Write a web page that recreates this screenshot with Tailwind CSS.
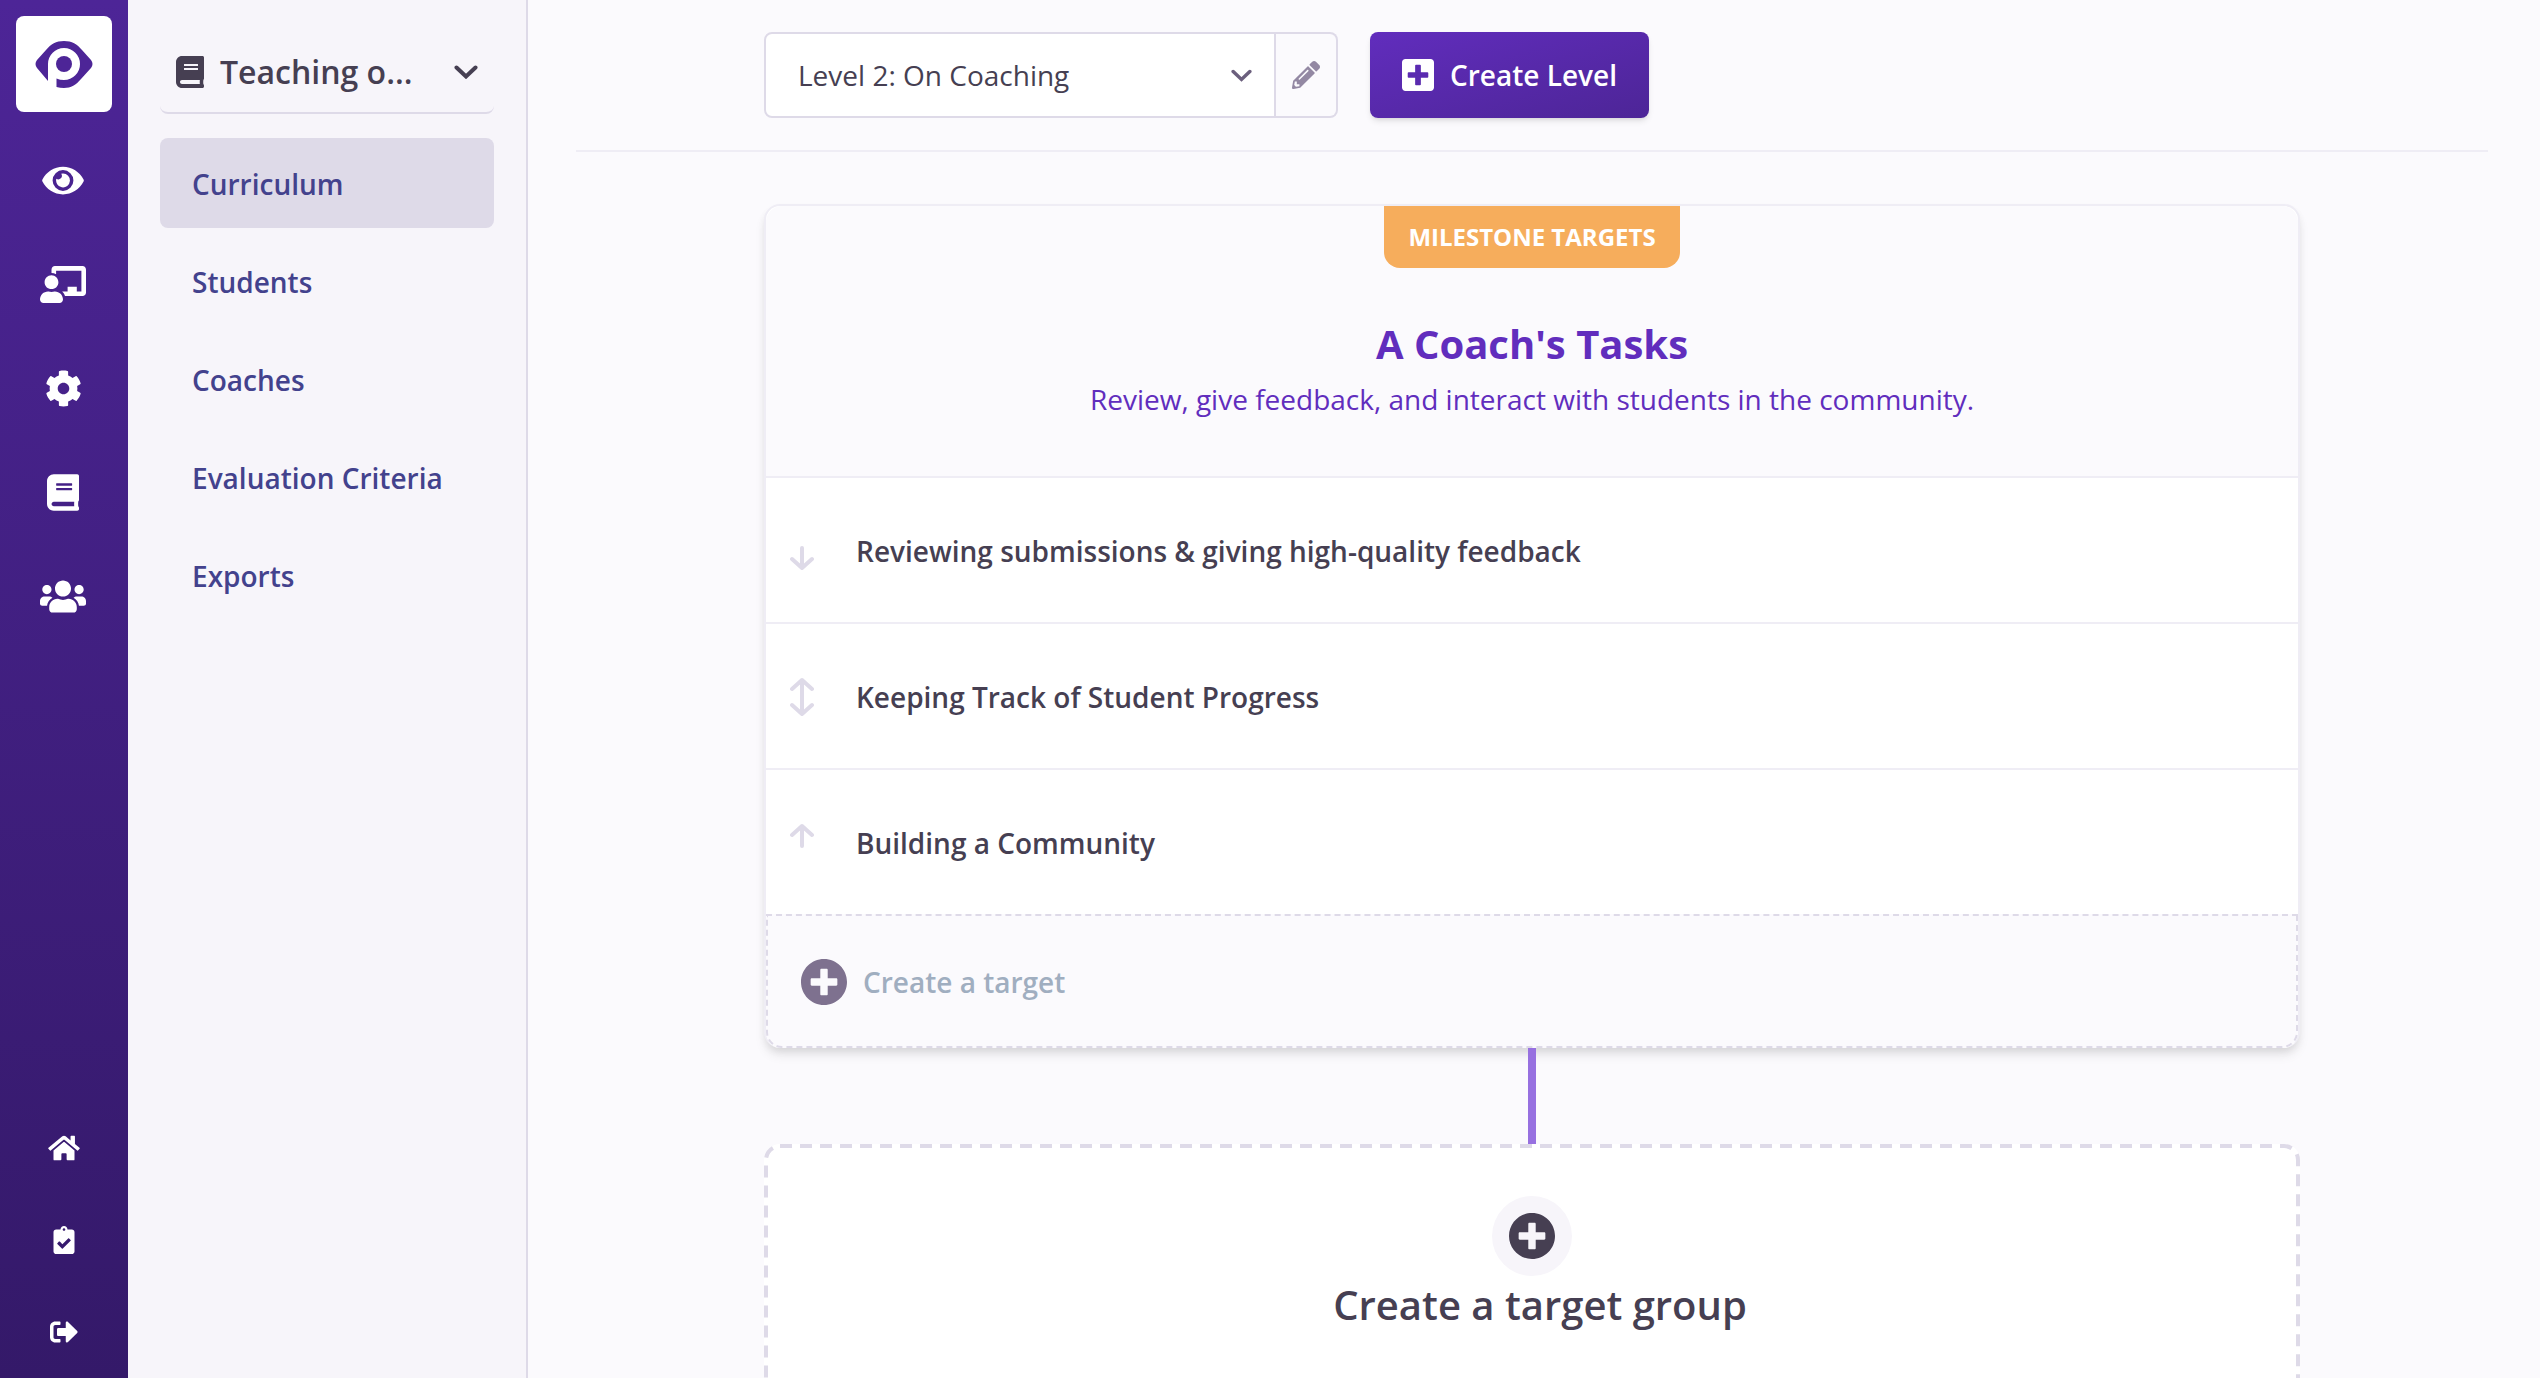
<!DOCTYPE html>
<html lang="en">
<head>
<meta charset="utf-8">
<title>Curriculum</title>
<script src="https://cdn.jsdelivr.net/npm/@tailwindcss/browser@4"></script>
</head>
<body class="bg-[#fbfafd] font-['Open_Sans',sans-serif] text-[28px] leading-[42px] text-[#463f52]">
<svg class="hidden" aria-hidden="true">
  <symbol id="book" viewBox="0 0 448 512"><path d="M448 360V24c0-13.300-10.700-24-24-24H96C43 0 0 43 0 96v320c0 53 43 96 96 96h328c13.300 0 24-10.700 24-24v-16c0-7.500-3.500-14.300-8.900-18.700-4.200-15.400-4.200-59.300 0-74.700 5.400-4.300 8.900-11.100 8.900-18.600zM128 134c0-3.300 2.700-6 6-6h212c3.300 0 6 2.700 6 6v20c0 3.300-2.700 6-6 6H134c-3.300 0-6-2.700-6-6v-20zm0 64c0-3.300 2.700-6 6-6h212c3.300 0 6 2.700 6 6v20c0 3.300-2.700 6-6 6H134c-3.300 0-6-2.700-6-6v-20zm253.400 250H96c-17.700 0-32-14.300-32-32 0-17.600 14.400-32 32-32h285.400c-1.900 17.100-1.900 46.900 0 64z"/></symbol>
  <symbol id="chevron" viewBox="0 0 24 14"><path d="M2.500 2.500 12 11.500 21.500 2.500" fill="none" stroke="currentColor" stroke-width="4" stroke-linecap="round"/></symbol>
  <symbol id="plus-circle" viewBox="8 8 496 496"><path d="M256 8C119 8 8 119 8 256s111 248 248 248 248-111 248-248S393 8 256 8zm144 276c0 6.600-5.400 12-12 12h-92v92c0 6.600-5.400 12-12 12h-56c-6.600 0-12-5.400-12-12v-92h-92c-6.600 0-12-5.400-12-12v-56c0-6.600 5.400-12 12-12h92v-92c0-6.600 5.400-12 12-12h56c6.600 0 12 5.400 12 12v92h92c6.600 0 12 5.400 12 12v56z"/></symbol>
</svg>
<div class="flex min-h-screen">
  <nav aria-label="School" class="flex w-32 shrink-0 flex-col items-center justify-between bg-linear-to-b from-[#4d2597] to-[#341969] pt-4 text-white">
    <div class="flex flex-col items-center">
      <a href="#" aria-label="Pupilfirst" class="mb-4 flex size-24 items-center justify-center rounded-lg bg-white text-[#4d2597]">
        <svg class="h-12 w-[58px]" viewBox="0 0 58 48" fill="currentColor"><path fill-rule="evenodd" d="M29 1C37 1 42 4 47 10L56 20Q59 24 56 28L46 39C41 45 36 48 29 48Q25 48 21.500 47V38.500Q25 40 29 40A16 16 0 1 0 13 24V41L2 28Q-1 24 2 20L11 10C16 4 21 1 29 1Z"/><circle cx="29" cy="24" r="8"/></svg>
      </a>
      <a href="#" aria-label="Overview" class="flex h-[104px] w-24 items-center justify-center pr-0.5"><svg class="h-[37px] w-[42px]" viewBox="0 0 576 512" fill="currentColor"><path d="M572.500 241.400C518.300 135.600 410.900 64 288 64S57.700 135.600 3.500 241.400a32.400 32.400 0 0 0 0 29.200C57.700 376.400 165.100 448 288 448s230.300-71.600 284.500-177.400a32.400 32.400 0 0 0 0-29.200zM288 400a144 144 0 1 1 144-144 143.900 143.900 0 0 1-144 144zm0-240a95.300 95.300 0 0 0-25.300 3.800 47.900 47.900 0 0 1-66.900 66.900A95.800 95.800 0 1 0 288 160z"/></svg></a>
      <a href="#" aria-label="Coaches" class="flex h-[104px] w-24 items-center justify-center pr-0.5"><svg class="h-[37px] w-[46px]" viewBox="0 0 640 512" fill="currentColor"><path d="M208 352c-2.400 0-4.800.4-7.100 1.100C188 357.300 174.400 360 160 360s-28-2.700-40.900-6.900c-2.300-.7-4.700-1.100-7.100-1.100C49.900 352-.3 402.500 0 464.600.1 490.900 21.700 512 48 512h224c26.300 0 47.900-21.100 48-47.400.3-62.100-49.900-112.600-112-112.600zm-48-32c53 0 96-43 96-96s-43-96-96-96-96 43-96 96 43 96 96 96zM592 0H208c-26.500 0-48 22.300-48 49.600V96c23.400 0 45.100 6.800 64 17.800V64h352v288h-64v-64H384v64h-76.200c19.300 16.700 33.100 38.700 39.600 64H592c26.500 0 48-22.300 48-49.600V49.600C640 22.300 618.500 0 592 0z"/></svg></a>
      <a href="#" aria-label="Settings" class="flex h-[104px] w-24 items-center justify-center pr-0.5"><svg class="size-[37px]" viewBox="0 0 512 512" fill="currentColor"><path d="M487.400 315.700l-42.600-24.600c4.300-23.200 4.300-47 0-70.200l42.600-24.600c4.900-2.800 7.100-8.600 5.500-14-11.100-35.600-30-67.800-54.700-94.600-3.800-4.100-10-5.100-14.800-2.300L380.800 110c-17.900-15.400-38.500-27.300-60.800-35.100V25.800c0-5.600-3.900-10.500-9.400-11.700-36.700-8.200-74.300-7.800-109.200 0-5.500 1.200-9.400 6.100-9.400 11.700V75c-22.200 7.900-42.800 19.800-60.800 35.100L88.700 85.500c-4.900-2.800-11-1.900-14.800 2.300-24.700 26.700-43.600 58.900-54.700 94.600-1.700 5.400.6 11.200 5.500 14L67.300 221c-4.300 23.200-4.300 47 0 70.200l-42.600 24.600c-4.900 2.800-7.100 8.600-5.500 14 11.100 35.600 30 67.800 54.700 94.600 3.800 4.100 10 5.100 14.800 2.300l42.600-24.600c17.900 15.400 38.500 27.300 60.800 35.100v49.200c0 5.600 3.900 10.500 9.400 11.700 36.700 8.200 74.300 7.800 109.200 0 5.500-1.200 9.400-6.100 9.400-11.700v-49.200c22.200-7.900 42.800-19.800 60.800-35.100l42.600 24.600c4.900 2.800 11 1.900 14.800-2.300 24.700-26.700 43.600-58.900 54.700-94.600 1.500-5.500-.7-11.300-5.600-14.100zM256 336c-44.100 0-80-35.900-80-80s35.900-80 80-80 80 35.900 80 80-35.900 80-80 80z"/></svg></a>
      <a href="#" aria-label="Courses" class="flex h-[104px] w-24 items-center justify-center pr-0.5"><svg class="h-[37px] w-8" fill="currentColor"><use href="#book"/></svg></a>
      <a href="#" aria-label="Communities" class="flex h-[104px] w-24 items-center justify-center pr-0.5"><svg class="h-[37px] w-[46px]" viewBox="0 0 640 512" fill="currentColor"><path d="M96 224c35.300 0 64-28.700 64-64s-28.700-64-64-64-64 28.700-64 64 28.700 64 64 64zm448 0c35.300 0 64-28.700 64-64s-28.700-64-64-64-64 28.700-64 64 28.700 64 64 64zm32 32h-64c-17.600 0-33.500 7.100-45.100 18.600 40.300 22.100 68.900 62 75.100 109.400h66c17.700 0 32-14.300 32-32v-32c0-35.300-28.700-64-64-64zm-256 0c61.900 0 112-50.100 112-112S381.900 32 320 32 208 82.100 208 144s50.100 112 112 112zm76.800 32h-8.300c-20.800 10-43.900 16-68.500 16s-47.600-6-68.500-16h-8.300C179.600 288 128 339.600 128 403.200V432c0 26.500 21.500 48 48 48h288c26.500 0 48-21.500 48-48v-28.800c0-63.600-51.600-115.200-115.200-115.200zm-223.700-13.400C161.500 263.100 145.600 256 128 256H64c-35.300 0-64 28.700-64 64v32c0 17.700 14.300 32 32 32h65.900c6.300-47.400 34.900-87.300 75.200-109.400z"/></svg></a>
    </div>
    <div class="flex flex-col items-center">
      <a href="#" aria-label="Home" class="flex h-[92px] w-24 items-center justify-center"><svg class="h-7 w-8" viewBox="0 0 576 512" fill="currentColor"><path d="M280.400 148.300L96 300.100V464a16 16 0 0 0 16 16l112.100-.3a16 16 0 0 0 15.900-16V368a16 16 0 0 1 16-16h64a16 16 0 0 1 16 16v95.600a16 16 0 0 0 16 16.100L464 480a16 16 0 0 0 16-16V300L295.700 148.300a12.200 12.200 0 0 0-15.300 0zM571.600 251.500L488 182.600V44.100a12 12 0 0 0-12-12h-56a12 12 0 0 0-12 12v72.600L318.500 43a48 48 0 0 0-61 0L4.300 251.500a12 12 0 0 0-1.600 16.900l25.500 31A12 12 0 0 0 45.200 301l235.200-193.700a12.200 12.200 0 0 1 15.300 0L530.900 301a12 12 0 0 0 16.900-1.600l25.500-31a12 12 0 0 0-1.700-16.900z"/></svg></a>
      <a href="#" aria-label="Review" class="flex h-[92px] w-24 items-center justify-center"><svg class="h-7 w-[22px]" viewBox="0 0 384 512" fill="currentColor"><path d="M336 64h-80c0-35.300-28.700-64-64-64s-64 28.700-64 64H48C21.500 64 0 85.500 0 112v352c0 26.500 21.500 48 48 48h288c26.500 0 48-21.500 48-48V112c0-26.500-21.500-48-48-48zM192 40c13.300 0 24 10.700 24 24s-10.700 24-24 24-24-10.700-24-24 10.700-24 24-24zm121.200 231.800l-143 141.800c-4.700 4.700-12.300 4.600-17-.1l-82.600-83.300c-4.700-4.700-4.600-12.300.1-17L99.100 285c4.700-4.700 12.300-4.600 17 .1l46 46.400 106-105.200c4.700-4.700 12.300-4.600 17 .1l28.200 28.400c4.700 4.800 4.600 12.300-.1 17z"/></svg></a>
      <a href="#" aria-label="Sign out" class="flex h-[92px] w-24 items-center justify-center"><svg class="size-7" viewBox="0 0 512 512" fill="currentColor"><path d="M497 273L329 441c-15 15-41 4.500-41-17v-96H152c-13.300 0-24-10.700-24-24v-96c0-13.300 10.700-24 24-24h136V88c0-21.400 25.900-32 41-17l168 168c9.300 9.400 9.300 24.600 0 34zM192 436v-40c0-6.600-5.400-12-12-12H96c-17.700 0-32-14.300-32-32V160c0-17.700 14.300-32 32-32h84c6.600 0 12-5.400 12-12V76c0-6.600-5.400-12-12-12H96c-53 0-96 43-96 96v192c0 53 43 96 96 96h84c6.600 0 12-5.400 12-12z"/></svg></a>
    </div>
  </nav>
  <aside class="w-[400px] shrink-0 border-r-2 border-[#dedae8] bg-[#f7f5fa] px-8 pt-8">
    <button type="button" class="flex h-[82px] w-full items-center rounded-lg border-b-2 border-[#dedae8] px-4 text-[32px] font-semibold">
      <svg class="mr-4 h-8 w-7 shrink-0" fill="currentColor"><use href="#book"/></svg>
      <span class="grow text-left">Teaching o...</span>
      <svg class="h-[14px] w-6 shrink-0"><use href="#chevron"/></svg>
    </button>
    <ul class="mt-6 flex flex-col gap-2 font-semibold text-[#43428d]">
      <li><a href="#" aria-current="page" class="flex h-[90px] items-center rounded-lg bg-[#dedae8] px-8 pt-0.5">Curriculum</a></li>
      <li><a href="#" class="flex h-[90px] items-center rounded-lg px-8 pt-0.5">Students</a></li>
      <li><a href="#" class="flex h-[90px] items-center rounded-lg px-8 pt-0.5">Coaches</a></li>
      <li><a href="#" class="flex h-[90px] items-center rounded-lg px-8 pt-0.5">Evaluation Criteria</a></li>
      <li><a href="#" class="flex h-[90px] items-center rounded-lg px-8 pt-0.5">Exports</a></li>
    </ul>
  </aside>
  <main class="h-screen min-w-0 grow overflow-hidden pr-[52px] pl-12">
    <header class="border-b-2 border-[#efedf5] py-8">
      <div class="mx-auto flex h-[86px] max-w-[1536px] gap-8">
        <div class="flex w-[574px]">
          <div class="relative grow">
            <select aria-label="Level" class="h-full w-full appearance-none rounded-l-lg border-2 border-[#dedae8] bg-white px-8">
              <option>Level 2: On Coaching</option>
            </select>
            <svg class="pointer-events-none absolute top-[37px] right-6 h-[13px] w-[21px] text-[#6b5f7d]"><use href="#chevron"/></svg>
          </div>
          <button type="button" aria-label="Edit level" class="flex w-[62px] items-center justify-center rounded-r-lg border-2 border-l-0 border-[#dedae8] text-[#9388a3]">
            <svg class="size-7" viewBox="0 0 512 512" fill="currentColor"><path d="M497.900 142.100l-46.100 46.100c-4.700 4.700-12.300 4.700-17 0l-111-111c-4.700-4.700-4.700-12.300 0-17l46.100-46.100c18.700-18.700 49.100-18.700 67.900 0l60.100 60.100c18.800 18.700 18.800 49.100 0 67.900zM284.200 99.800L21.600 362.400.4 483.900c-2.900 16.400 11.400 30.600 27.800 27.800l121.500-21.300 262.600-262.600c4.700-4.700 4.700-12.300 0-17l-111-111c-4.800-4.700-12.400-4.700-17.100 0zM124.100 339.900c-5.500-5.500-5.500-14.300 0-19.800l154-154c5.500-5.500 14.300-5.500 19.800 0s5.500 14.300 0 19.800l-154 154c-5.500 5.500-14.300 5.500-19.800 0zM88 424h48v36.300l-64.500 11.300-31.100-31.100L51.700 376H88v48z"/></svg>
          </button>
        </div>
        <button type="button" class="flex items-center gap-4 rounded-lg bg-linear-to-br from-[#612dbd] to-[#4d2597] px-8 font-semibold text-white shadow-md">
          <svg class="size-8" viewBox="0 32 448 448" fill="currentColor"><path d="M400 32H48C21.500 32 0 53.500 0 80v352c0 26.500 21.500 48 48 48h352c26.500 0 48-21.500 48-48V80c0-26.500-21.500-48-48-48zm-32 252c0 6.600-5.400 12-12 12h-92v92c0 6.600-5.400 12-12 12h-56c-6.600 0-12-5.400-12-12v-92H92c-6.600 0-12-5.400-12-12v-56c0-6.600 5.400-12 12-12h92v-92c0-6.600 5.400-12 12-12h56c6.600 0 12 5.400 12 12v92h92c6.600 0 12 5.400 12 12v56z"/></svg>
          Create Level
        </button>
      </div>
    </header>
    <div class="mx-auto flex max-w-[1536px] flex-col items-center pt-[52px]">
      <section class="w-full rounded-2xl border-2 border-b-0 border-[#efedf5] bg-white shadow-[0_8px_12px_-2px_rgba(0,0,0,0.10),0_4px_8px_-2px_rgba(0,0,0,0.08)]">
        <div class="flex h-[272px] flex-col items-center rounded-t-2xl border-b-2 border-[#efedf5] bg-[#fbfafd] text-center text-[#612dbd]">
          <div class="flex h-[62px] items-center rounded-b-2xl bg-[#f6ad5c] px-6 text-2xl font-bold text-white uppercase">Milestone targets</div>
          <h2 class="mt-11 mb-0.5 text-[40px] leading-[64px] font-bold">A Coach's Tasks</h2>
          <p>Review, give feedback, and interact with students in the community.</p>
        </div>
        <ul class="font-semibold">
          <li class="flex h-[146px] items-center border-b-2 border-[#efedf5] pt-0.5">
            <button type="button" aria-label="Move down" class="flex w-[90px] pl-6 text-[#dedae8]"><svg class="h-10 w-6" viewBox="0 0 24 40" fill="none" stroke="currentColor" stroke-width="4" stroke-linecap="round" stroke-linejoin="round"><path d="M12 17V37M2 28 12 37 22 28"/></svg></button>
            <a href="#">Reviewing submissions &amp; giving high-quality feedback</a>
          </li>
          <li class="flex h-[146px] items-center border-b-2 border-[#efedf5] pt-0.5">
            <button type="button" aria-label="Move up or down" class="flex w-[90px] pl-6 text-[#dedae8]"><svg class="h-10 w-6" viewBox="0 0 24 40" fill="none" stroke="currentColor" stroke-width="4" stroke-linecap="round" stroke-linejoin="round"><path d="M12 3V37M2 28 12 37 22 28M2 12 12 3 22 12"/></svg></button>
            <a href="#">Keeping Track of Student Progress</a>
          </li>
          <li class="flex h-[144px] items-center pt-0.5">
            <button type="button" aria-label="Move up" class="flex w-[90px] pl-6 text-[#dedae8]"><svg class="h-10 w-6" viewBox="0 0 24 40" fill="none" stroke="currentColor" stroke-width="4" stroke-linecap="round" stroke-linejoin="round"><path d="M12 23V3M2 12 12 3 22 12"/></svg></button>
            <a href="#">Building a Community</a>
          </li>
        </ul>
        <div class="flex h-[134px] items-center rounded-b-2xl border-2 border-dashed border-[#dedae8] bg-[#fbfafd] pt-0.5 pr-8 pl-[33px]">
          <label for="new-target" class="mr-4"><svg class="size-[46px] text-[#7e718f]" fill="currentColor"><use href="#plus-circle"/></svg></label>
          <input id="new-target" type="text" placeholder="Create a target" class="grow bg-transparent font-semibold outline-none placeholder:text-[#a0aec0]">
        </div>
      </section>
      <div class="h-24 w-2 bg-[#9770e0]"></div>
      <button type="button" class="relative flex w-full flex-col items-center rounded-2xl bg-white pt-[52px] pb-16 text-[40px] font-semibold">
        <svg class="absolute inset-0 size-full" fill="none" stroke="#dedae8" stroke-width="4" stroke-dasharray="12 8" aria-hidden="true"><rect x="2" y="2" rx="14" class="h-[calc(100%-4px)] w-[calc(100%-4px)]"/></svg>
        <span class="flex size-20 items-center justify-center rounded-full bg-[#f7f5fa]"><svg class="size-[46px]" fill="currentColor"><use href="#plus-circle"/></svg></span>
        <span class="pl-4 leading-[58px]">Create a target group</span>
      </button>
    </div>
  </main>
</div>
</body>
</html>
